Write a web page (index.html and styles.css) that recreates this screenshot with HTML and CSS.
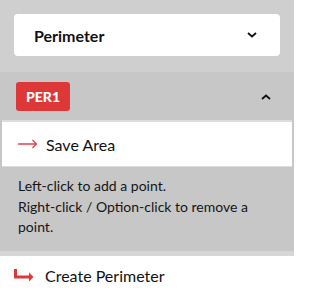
FILE: index.html
```html
<!DOCTYPE html>
<html>
<head>
<meta charset="utf-8">
<link rel="stylesheet" href="styles.css">
</head>
<body>
<div class="page">
<div class="top">
  <div class="select">
    <span class="select-label">Perimeter</span>
    <svg class="chev" width="10" height="6" viewBox="0 0 10 6"><path d="M1 1 L5 4.5 L9 1" fill="none" stroke="#111" stroke-width="1.8"/></svg>
  </div>
</div>
<div class="section">
  <div class="section-head">
    <span class="badge">PER1</span>
    <svg class="chev up" width="10" height="6" viewBox="0 0 10 6"><path d="M1 5 L5 1.5 L9 5" fill="none" stroke="#111" stroke-width="1.8"/></svg>
  </div>
  <div class="save">
    <svg class="arrow" width="20" height="10" viewBox="0 0 20 10"><path d="M0 5 H18.5 M14.5 1 L18.5 5 L14.5 9" fill="none" stroke="#e04848" stroke-width="1.4"/></svg>
    <span>Save Area</span>
  </div>
  <div class="help">
    <p>Left-click to add a point.</p>
    <p>Right-click / Option-click to remove a point.</p>
  </div>
</div>
<div class="band"></div>
<div class="create">
  <svg class="ret" width="20" height="13" viewBox="0 0 20 13"><path d="M1.5 0 V8 H16" fill="none" stroke="#dc3838" stroke-width="3"/><path d="M15 3.5 L19.5 8 L15 12.5 Z" fill="#dc3838"/></svg>
  <span>Create Perimeter</span>
</div>
</div>
</body>
</html>
```
FILE: styles.css
```css
html, body {
  margin: 0;
  padding: 0;
  background: #ffffff;
  font-family: "Lato", "Open Sans", sans-serif;
  color: #111;
}
.page {
  width: 294px;
  height: 296px;
  overflow: hidden;
}
.top {
  background: #cfcfcf;
  padding: 14px 14px 16px 14px;
}
.select {
  background: #ffffff;
  border-radius: 4px;
  height: 42px;
  display: flex;
  align-items: center;
  justify-content: space-between;
  padding: 0 23px 0 20px;
}
.select-label {
  font-weight: 700;
  font-size: 16px;
}
.section {
  background: #c7c7c7;
  padding-bottom: 13px;
}
.section-head {
  display: flex;
  align-items: center;
  justify-content: space-between;
  padding: 10px 23px 9px 16px;
}
.badge {
  background: #dc3838;
  color: #fff;
  font-weight: 900;
  font-size: 14px;
  height: 29px;
  width: 54px;
  border-radius: 3px;
  display: flex;
  align-items: center;
  justify-content: center;
}
.save {
  margin-left: 2px;
  margin-right: 2px;
  background: #fff;
  border-top: 2px solid #dcdcdc;
  border-bottom: 1px solid #dcdcdc;
  height: 44px;
  display: flex;
  align-items: center;
  gap: 8px;
  padding-left: 16px;
  font-size: 16px;
}
.help {
  padding: 9px 18px 0 18px;
  font-size: 14px;
  line-height: 20.5px;
  color: #151515;
}
.help p {
  margin: 0;
}
.band {
  height: 5px;
  background: #d6d6d6;
}
.create {
  display: flex;
  align-items: center;
  gap: 11px;
  padding-left: 14px;
  height: 40px;
  font-size: 16px;
}
```
